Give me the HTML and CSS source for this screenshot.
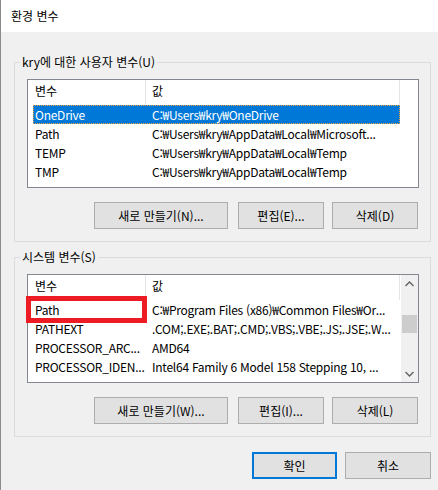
FILE: index.html
```html
<!DOCTYPE html>
<html lang="ko">
<head>
<meta charset="utf-8">
<title>환경 변수</title>
<link rel="stylesheet" href="styles.css">
</head>
<body>
<div class="window">
  <div class="titlebar">환경 변수</div>
  <div class="content">
    <fieldset class="group">
      <legend>kry에 대한 사용자 변수(U)</legend>
      <div class="listview">
        <div class="lv-main">
          <div class="lv-head">
            <div class="hcol c1">변수</div>
            <div class="hcol c2">값</div>
          </div>
          <div class="row selected"><span class="cell n">OneDrive</span><span class="cell v">C:₩Users₩kry₩OneDrive</span></div>
          <div class="row"><span class="cell n">Path</span><span class="cell v">C:₩Users₩kry₩AppData₩Local₩Microsoft...</span></div>
          <div class="row"><span class="cell n">TEMP</span><span class="cell v">C:₩Users₩kry₩AppData₩Local₩Temp</span></div>
          <div class="row"><span class="cell n">TMP</span><span class="cell v">C:₩Users₩kry₩AppData₩Local₩Temp</span></div>
        </div>
      </div>
      <div class="btnrow">
        <button class="btn wide">새로 만들기(N)...</button>
        <button class="btn">편집(E)...</button>
        <button class="btn">삭제(D)</button>
      </div>
    </fieldset>

    <fieldset class="group second">
      <legend>시스템 변수(S)</legend>
      <div class="listview">
        <div class="lv-main">
          <div class="lv-head">
            <div class="hcol c1">변수</div>
            <div class="hcol c2">값</div>
          </div>
          <div class="row"><span class="cell n">Path</span><span class="cell v">C:₩Program Files (x86)₩Common Files₩Or...</span></div>
          <div class="row"><span class="cell n">PATHEXT</span><span class="cell v">.COM;.EXE;.BAT;.CMD;.VBS;.VBE;.JS;.JSE;.W...</span></div>
          <div class="row"><span class="cell n">PROCESSOR_ARC...</span><span class="cell v">AMD64</span></div>
          <div class="row"><span class="cell n">PROCESSOR_IDEN...</span><span class="cell v">Intel64 Family 6 Model 158 Stepping 10, ...</span></div>
        </div>
        <div class="scrollbar">
          <div class="arrow">
            <svg width="9" height="6" viewBox="0 0 9 6"><polyline points="0.5,5 4.5,1 8.5,5" fill="none" stroke="#606060" stroke-width="1.3"/></svg>
          </div>
          <div class="track"><div class="thumb"></div></div>
          <div class="arrow">
            <svg width="9" height="6" viewBox="0 0 9 6"><polyline points="0.5,1 4.5,5 8.5,1" fill="none" stroke="#606060" stroke-width="1.3"/></svg>
          </div>
        </div>
        <div class="highlight"></div>
      </div>
      <div class="btnrow">
        <button class="btn wide">새로 만들기(W)...</button>
        <button class="btn">편집(I)...</button>
        <button class="btn">삭제(L)</button>
      </div>
    </fieldset>

    <div class="footer">
      <button class="btn default">확인</button>
      <button class="btn">취소</button>
    </div>
  </div>
</div>
</body>
</html>
```
FILE: styles.css
```css
* { box-sizing: border-box; }
html, body {
  margin: 0;
  padding: 0;
  background: #f0f0f0;
}
body {
  font-family: "Noto Sans CJK KR", "Noto Sans", sans-serif;
  font-size: 12px;
  color: #000;
}
.window {
  width: 438px;
  height: 490px;
  border-left: 1px solid #8a8a8a;
  background: #f0f0f0;
  overflow: hidden;
}
.titlebar {
  height: 32px;
  background: #fff;
  padding-left: 10px;
  line-height: 32px;
  font-size: 12px;
}
.content {
  padding-left: 13px;
}
.group {
  margin: 22px 0 0 0;
  width: 417px;
  border: 1px solid #dcdcdc;
  padding: 9px 11px 12px 12px;
  min-width: 0;
}
.group.second {
  margin-top: 7px;
}
.group legend {
  padding: 0 2px;
  margin-left: -7px;
  line-height: 16px;
  height: 16px;
}
.listview {
  position: relative;
  display: flex;
  width: 392px;
  height: 109px;
  border: 1px solid #828790;
  background: #fff;
}
.lv-main {
  flex: 1;
  min-width: 0;
}
.lv-head {
  display: flex;
  height: 25px;
  width: 372px;
}
.hcol {
  line-height: 22px;
  border-right: 1px solid #e5e5e5;
  white-space: nowrap;
}
.hcol.c1 { width: 118px; padding-left: 7px; }
.hcol.c2 { width: 254px; padding-left: 6px; }
.row {
  display: flex;
  height: 19px;
  line-height: 18px;
  width: 367px;
  margin-left: 5px;
  border: 1px solid transparent;
  white-space: nowrap;
  letter-spacing: -0.25px;
}
.row.selected {
  background: #0078d7;
  color: #fff;
  border: 1px dotted #f3a13a;
}
.cell { overflow: visible; }
.cell.n { width: 112px; flex: none; padding-left: 1px; }
.cell.v { flex: 1; padding-left: 6px; }
.scrollbar {
  width: 17px;
  margin-left: 1px;
  background: #f0f0f0;
  display: flex;
  flex-direction: column;
}
.arrow {
  height: 17px;
  display: flex;
  align-items: center;
  justify-content: center;
}
.track {
  flex: 1;
  padding-top: 23px;
}
.thumb {
  height: 18px;
  margin: 0 1px;
  background: #cdcdcd;
}
.highlight {
  position: absolute;
  left: -2px;
  top: 21px;
  width: 121px;
  height: 27px;
  border: 5px solid #ed1c24;
}
.btnrow {
  display: flex;
  justify-content: flex-end;
  margin-top: 14px;
  padding-right: 1px;
}
.btn {
  font-family: inherit;
  font-size: 12px;
  color: #000;
  height: 27px;
  width: 86px;
  background: #e1e1e1;
  border: 1px solid #adadad;
  padding: 0;
  margin: 0 0 0 8px;
}
.btn.wide {
  width: 134px;
  margin-right: 2px;
}
.btn.default {
  border: 2px solid #0078d7;
  width: 85px;
}
.footer {
  display: flex;
  justify-content: flex-end;
  width: 417px;
  margin-top: 15px;
}
```
